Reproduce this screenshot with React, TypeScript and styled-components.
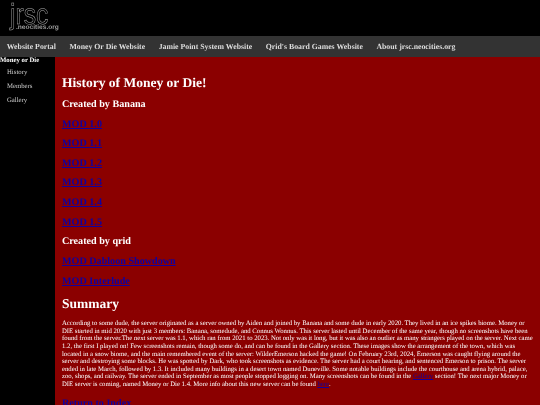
import React from "react";
import styled, { createGlobalStyle } from "styled-components";

const mods = ["1.0", "1.1", "1.2", "1.3", "1.4", "1.5"];
const navItems = [
  "Website Portal",
  "Money Or Die Website",
  "Jamie Point System Website",
  "Qrid's Board Games Website",
  "About jrsc.neocities.org",
];
const sideItems = ["History", "Members", "Gallery"];

const App = () => {
  return (
    <Page>
      <GlobalStyle />
      <Header>
        <Logo>
          <LogoMark>jrsc</LogoMark>
          <LogoSub>.neocities.org</LogoSub>
        </Logo>
      </Header>
      <Nav>
        {navItems.map((item) => (
          <NavLink key={item} href="#">
            {item}
          </NavLink>
        ))}
      </Nav>
      <Layout>
        <Sidebar>
          <SideTitle>Money or Die</SideTitle>
          {sideItems.map((item) => (
            <SideLink key={item} href="#">
              {item}
            </SideLink>
          ))}
        </Sidebar>
        <Main>
          <Title>History of Money or Die!</Title>
          <SubTitle>Created by Banana</SubTitle>
          {mods.map((mod) => (
            <ModLink key={mod}>
              <a href="#">MOD {mod}</a>
            </ModLink>
          ))}
          <SubTitle>Created by qrid</SubTitle>
          <ModLink>
            <a href="#">MOD Dabloon Showdown</a>
          </ModLink>
          <ModLink>
            <a href="#">MOD Interlude</a>
          </ModLink>
          <Summary>Summary</Summary>
          <Body>
            According to some dude, the server originated as a server owned by
            Aiden and joined by Banana and some dude in early 2020. They lived
            in an ice spikes biome. Money or DIE started in mid 2020 with just 3
            members: Banana, somedude, and Connus Wonnus. This server lasted
            until December of the same year, though no screenshots have been
            found from the server.The next server was 1.1, which ran from 2021
            to 2023. Not only was it long, but it was also an outlier as many
            strangers played on the server. Next came 1.2, the first I played
            on! Few screenshots remain, though some do, and can be found in the
            Gallery section. These images show the arrangement of the town,
            which was located in a snow biome, and the main remembered event of
            the server: WilderEmerson hacked the game! On February 23rd, 2024,
            Emerson was caught flying around the server and destroying some
            blocks. He was spotted by Dark, who took screenshots as evidence.
            The server had a court hearing, and sentenced Emerson to prison. The
            server ended in late March, followed by 1.3. It included many
            buildings in a desert town named Duneville. Some notable buildings
            include the courthouse and arena hybrid, palace, zoo, shops, and
            railway. The server ended in September as most people stopped
            logging on. Many screenshots can be found in the{" "}
            <a href="#">Gallery</a> section! The next major Money or DIE server
            is coming, named Money or Die 1.4. More info about this new server
            can be found <a href="#">here</a>.
          </Body>
          <ModLink>
            <a href="#">Return to Index</a>
          </ModLink>
        </Main>
      </Layout>
    </Page>
  );
};

export default App;

const GlobalStyle = createGlobalStyle`
  html, body {
    margin: 0;
    padding: 0;
    height: 405px;
    overflow: hidden;
    background: #000;
    font-family: "Liberation Serif", "Times New Roman", serif;
    text-rendering: geometricPrecision;
  }
`;

const Page = styled.div`
  width: 540px;
  height: 405px;
  overflow: hidden;
  display: flex;
  flex-direction: column;
  filter: blur(0.3px);
`;

const Header = styled.header`
  height: 36px;
  flex-shrink: 0;
  background-color: #000;
  display: flex;
  align-items: flex-start;
  padding: 4px 0 0 10px;
  box-sizing: border-box;
`;

const Logo = styled.div`
  display: flex;
  flex-direction: column;
  width: 55px;
`;

const LogoMark = styled.span`
  font-family: "Liberation Sans", Arial, sans-serif;
  font-size: 29px;
  line-height: 23px;
  color: transparent;
  -webkit-text-stroke: 0.5px #b0b0b0;
  transform: scaleX(0.85);
  transform-origin: left center;
`;

const LogoSub = styled.span`
  font-family: "Liberation Sans", Arial, sans-serif;
  font-size: 6.6px;
  font-weight: 700;
  line-height: 7px;
  margin: -3px 0 0 6px;
  white-space: nowrap;
  color: #999;
`;

const Nav = styled.nav`
  height: 21px;
  flex-shrink: 0;
  background-color: #333;
  display: flex;
  align-items: center;
`;

const NavLink = styled.a`
  padding: 0 6.75px;
  font-size: 7.8px;
  font-weight: 700;
  color: #ddd;
  text-decoration: none;
  white-space: nowrap;
`;

const Layout = styled.div`
  flex: 1;
  display: flex;
  min-height: 0;
`;

const Sidebar = styled.aside`
  width: 55px;
  flex-shrink: 0;
  background-color: #000;
  display: flex;
  flex-direction: column;
`;

const SideTitle = styled.div`
  font-size: 6.76px;
  font-weight: 700;
  line-height: 8px;
  margin-bottom: 3.5px;
  color: #fff;
  white-space: nowrap;
`;

const SideLink = styled.a`
  padding-left: 7px;
  font-size: 6.76px;
  line-height: 8px;
  margin-bottom: 6.4px;
  color: #ccc;
  text-decoration: none;
`;

const Main = styled.main`
  flex: 1;
  min-width: 0;
  background-color: #8b0000;
  padding: 17.5px 6.5px 0 7px;
  color: #fff;

  a {
    color: #1000a0;
  }
`;

const Title = styled.h1`
  margin: 0 0 9px;
  font-size: 13.5px;
  line-height: 15px;
`;

const SubTitle = styled.h2`
  margin: 0 0 9px;
  font-size: 10.15px;
  line-height: 11px;
`;

const ModLink = styled.h2`
  margin: 0 0 8.65px;
  font-size: 10.15px;
  line-height: 11px;
`;

const Summary = styled.h1`
  margin: 3px 0 9.5px;
  font-size: 13.5px;
  line-height: 15px;
`;

const Body = styled.p`
  margin: 0 0 9.5px;
  font-size: 6.73px;
  line-height: 7.6px;
`;
